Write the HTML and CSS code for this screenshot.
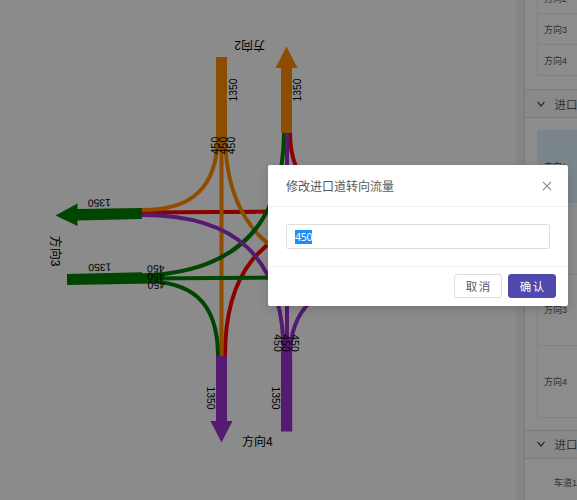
FILE: index.html
```html
<!DOCTYPE html>
<html lang="zh-CN">
<head>
<meta charset="utf-8">
<title>转向流量</title>
<link rel="stylesheet" href="styles.css">
</head>
<body>
<div class="app">
  <main class="canvas">
    <svg class="diagram" width="516" height="500" viewBox="0 0 516 500">
      <g class="flows">
        <path class="red" d="M142 212.5L368 211M225 356C225 285 250 218 368 215M290 133C290 180 320 210 368 212"/>
        <path class="orange" d="M218 133C218 190 190 210 142 210M221.5 133V356M225 133C225 200 250 270 368 278"/>
        <path class="green" d="M142 275.5C225 273 283 235 284 133M142 278.5L368 277M142 281C190 281 218 300 218 356"/>
        <path class="purple" d="M142 215C235 215 283 255 284 356M287 356V133M290 356C290 310 318 283 368 280"/>
      </g>
      <path class="orange-fill" d="M216 57h11v80h-11zM281 133V68h-5.500L286.500 46.500L297.500 68H292V133z"/>
      <path class="green-fill" d="M142 208L77.500 209V203.500L55.500 215.500L77.500 226V220.500L142 219zM67 274L142 272.300V273.500H154V283.500L67 285z"/>
      <path class="purple-fill" d="M216 356h11v65h5.500L221.500 442.500L210.500 421h5.500zM281 356V351h11V356h.2V431.500H281z"/>
      <g class="volume">
        <text transform="translate(232.800 90) rotate(-90)" dy="3.700">1350</text>
        <text transform="translate(297.500 90) rotate(-90)" dy="3.700">1350</text>
        <text transform="translate(214.800 145.500) rotate(-90)" dy="3.700">450</text>
        <text transform="translate(223 145.500) rotate(-90)" dy="3.700">450</text>
        <text transform="translate(231 145.500) rotate(-90)" dy="3.700">450</text>
        <text transform="translate(99.300 203) rotate(179)" dy="3.700">1350</text>
        <text transform="translate(99.800 267.500) rotate(179)" dy="3.700">1350</text>
        <text transform="translate(155.800 268.800) rotate(179)" dy="3.700">450</text>
        <text transform="translate(156 277) rotate(179)" dy="3.700">450</text>
        <text transform="translate(156.300 285.200) rotate(179)" dy="3.700">450</text>
        <text transform="translate(210.500 398) rotate(90)" dy="3.700">1350</text>
        <text transform="translate(275.300 398) rotate(90)" dy="3.700">1350</text>
        <text transform="translate(277.700 343) rotate(90)" dy="3.700">450</text>
        <text transform="translate(286 343) rotate(90)" dy="3.700">450</text>
        <text transform="translate(294.500 343) rotate(90)" dy="3.700">450</text>
      </g>
      <g class="direction">
        <text transform="translate(249.600 45.800) rotate(180)" dy="4.500">方向2</text>
        <text transform="translate(55.500 251.200) rotate(90)" dy="4.500">方向3</text>
        <text transform="translate(257.400 441.500)" dy="4.500">方向4</text>
      </g>
    </svg>
  </main>
  <div class="gutter"></div>
  <aside class="panel">
    <div class="table table-top">
      <div class="row">方向2</div>
      <div class="row">方向3</div>
      <div class="row">方向4</div>
    </div>
    <div class="section">
      <svg width="10" height="10" viewBox="0 0 10 10"><path d="M1.500 2.800L5 7L8.500 2.800"/></svg>
      <span>进口道</span>
    </div>
    <div class="table table-flow">
      <div class="row selected">方向1</div>
      <div class="row">方向2</div>
      <div class="row">方向3</div>
      <div class="row">方向4</div>
    </div>
    <div class="section">
      <svg width="10" height="10" viewBox="0 0 10 10"><path d="M1.500 2.800L5 7L8.500 2.800"/></svg>
      <span>进口车</span>
    </div>
    <div class="lane">车道1</div>
  </aside>
</div>
<div class="mask"></div>
<div class="modal">
  <header class="modal-head">
    <span>修改进口道转向流量</span>
    <svg width="10" height="10" viewBox="0 0 10 10"><path d="M1 .8L9 9.200M9 .8L1 9.200"/></svg>
  </header>
  <div class="modal-body">
    <div class="field"><span class="selection">450</span></div>
  </div>
  <footer class="modal-foot">
    <button class="btn">取消</button>
    <button class="btn primary">确认</button>
  </footer>
</div>
</body>
</html>
```

FILE: styles.css
```css
* { box-sizing: border-box; }
body {
  margin: 0;
  width: 577px;
  height: 500px;
  overflow: hidden;
  position: relative;
  font-family: "Noto Sans", "Noto Sans CJK SC", sans-serif;
  color: #595959;
  background: #fff;
}
.app { display: flex; height: 500px; }
.canvas { width: 516px; flex: none; background: #fdfdfd; }
.diagram { display: block; }
.flows { fill: none; stroke-width: 4; }
.orange { stroke: #ff8c00; }
.red { stroke: #ff0000; }
.purple { stroke: #9932cc; }
.green { stroke: #008000; }
.orange-fill { fill: #ff8c00; }
.green-fill { fill: #008000; }
.purple-fill { fill: #9932cc; }
.volume { font: 10.4px "Liberation Sans", sans-serif; text-anchor: middle; fill: #000; }
.direction { font: 12px "Liberation Sans", "Noto Sans CJK SC", sans-serif; text-anchor: middle; fill: #000; }

.gutter { width: 9px; flex: none; background: #f5f5f5; border-right: 2px solid #e8e8e8; }
.panel { flex: 1; min-width: 0; overflow: hidden; }
.table { margin-left: 12px; border-left: 1px solid #ececec; }
.row {
  display: flex;
  align-items: center;
  padding-left: 6px;
  border-bottom: 1px solid #ececec;
  font: 9px "Liberation Sans", "Noto Sans CJK SC", sans-serif;
  white-space: nowrap;
}
.table-top .row { height: 31px; }
.table-top { margin-top: -17px; }
.section {
  display: flex;
  align-items: center;
  gap: 8.5px;
  height: 29px;
  padding-left: 11px;
  border: solid #dedede;
  border-width: 1px 0;
  background: #fafafa;
  font: 11.5px "Noto Sans CJK SC", sans-serif;
  white-space: nowrap;
}
.section svg { flex: none; fill: none; stroke: #444; stroke-width: 1.2; }
.table-top + .section { margin-top: 13px; }
.table-flow { margin-top: 12px; margin-bottom: 12px; }
.table-flow .row { height: 71.5px; }
.table-flow .selected { height: 73px; background: #e0f3ff; }
.lane { padding: 17px 0 0 29px; font: 9px "Liberation Sans", "Noto Sans CJK SC", sans-serif; white-space: nowrap; }

.mask { position: absolute; inset: 0; background: rgba(0, 0, 0, .45); }
.modal {
  position: absolute;
  left: 268px;
  top: 165px;
  width: 300px;
  height: 141px;
  background: #fff;
  border-radius: 2px;
  box-shadow: 0 3px 10px rgba(0, 0, 0, .16);
}
.modal-head {
  display: flex;
  align-items: center;
  justify-content: space-between;
  height: 42px;
  padding: 0 16px 0 18px;
  border-bottom: 1px solid #f0f0f0;
  font: 12px "Noto Sans CJK SC", sans-serif;
}
.modal-head svg { fill: none; stroke: #858585; stroke-width: 1.1; }
.modal-body { height: 59px; padding: 17px 18px; }
.field {
  display: flex;
  align-items: center;
  height: 25px;
  padding-left: 8px;
  border: 1px solid #dedede;
  border-radius: 2px;
}
.selection {
  height: 14px;
  line-height: 14px;
  font-size: 10.5px;
  letter-spacing: -.3px;
  color: #fff;
  background: #1890ff;
}
.modal-foot {
  display: flex;
  justify-content: flex-end;
  gap: 6px;
  height: 40px;
  padding: 7px 12px 0;
  border-top: 1px solid #f0f0f0;
}
.btn {
  width: 48px;
  height: 24px;
  padding: 0 0 0 1.5px;
  border: 1px solid #dedede;
  border-radius: 3px;
  background: #fff;
  color: #595959;
  font: 11.5px "Noto Sans CJK SC", sans-serif;
  letter-spacing: 1.5px;
}
.primary { background: #4f49ad; border-color: #4f49ad; color: #fff; }
```
